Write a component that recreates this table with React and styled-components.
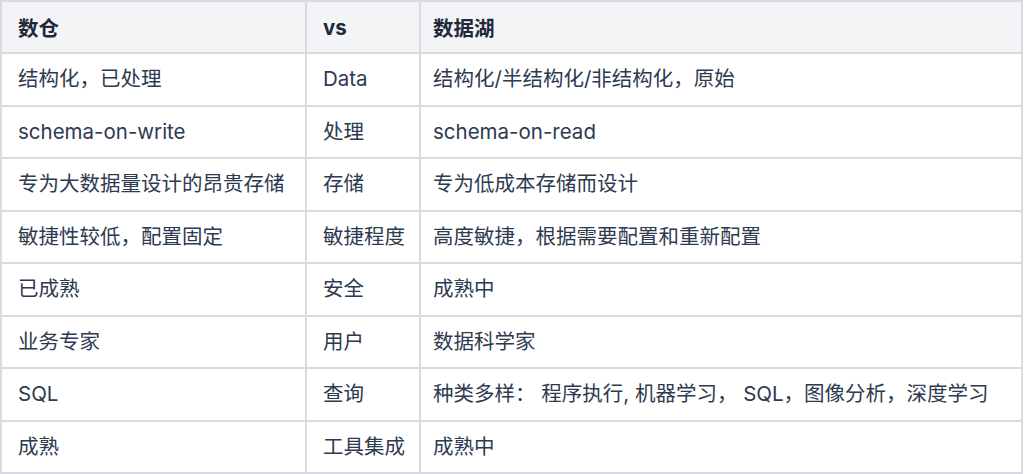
import React from "react";
import styled, { createGlobalStyle } from "styled-components";

const Global = createGlobalStyle`
  html, body { margin: 0; padding: 0; background: #ffffff; }
  body { font-family: Inter, "Noto Sans CJK SC", sans-serif; }
`;

const Table = styled.table`
  width: 1023px;
  border-collapse: collapse;
  table-layout: fixed;
  font-family: Inter, "Noto Sans CJK SC", sans-serif;
  font-size: 20.5px;
  color: #2d3a4f;
`;

const HeadRow = styled.tr`
  background: #f3f4f6;
  height: 52px;
`;

const Row = styled.tr`
  background: #ffffff;
  height: 52.5px;
`;

const Th = styled.th`
  text-align: left;
  font-weight: 700;
  color: #1e293b;
  padding: 0 ${(p) => (p.$wide ? "12px" : "16px")};
  border: 2px solid #d8dce2;
  white-space: nowrap;
`;

const Td = styled.td`
  padding: 0 ${(p) => (p.$wide ? "12px" : "16px")};
  border: 2px solid #d8dce2;
  white-space: nowrap;
  line-height: 28px;
`;

const rows = [
  ["结构化，已处理", "Data", "结构化/半结构化/非结构化，原始"],
  ["schema-on-write", "处理", "schema-on-read"],
  ["专为大数据量设计的昂贵存储", "存储", "专为低成本存储而设计"],
  ["敏捷性较低，配置固定", "敏捷程度", "高度敏捷，根据需要配置和重新配置"],
  ["已成熟", "安全", "成熟中"],
  ["业务专家", "用户", "数据科学家"],
  ["SQL", "查询", "种类多样： 程序执行, 机器学习， SQL，图像分析，深度学习"],
  ["成熟", "工具集成", "成熟中"],
];

export default function App() {
  return (
    <>
      <Global />
      <Table>
        <colgroup>
          <col style={{ width: 305 }} />
          <col style={{ width: 114 }} />
          <col />
        </colgroup>
        <thead>
          <HeadRow>
            <Th>数仓</Th>
            <Th>vs</Th>
            <Th $wide>数据湖</Th>
          </HeadRow>
        </thead>
        <tbody>
          {rows.map((r, i) => (
            <Row key={i}>
              {r.map((c, j) => (
                <Td key={j} $wide={j === 2}>
                  {c}
                </Td>
              ))}
            </Row>
          ))}
        </tbody>
      </Table>
    </>
  );
}
